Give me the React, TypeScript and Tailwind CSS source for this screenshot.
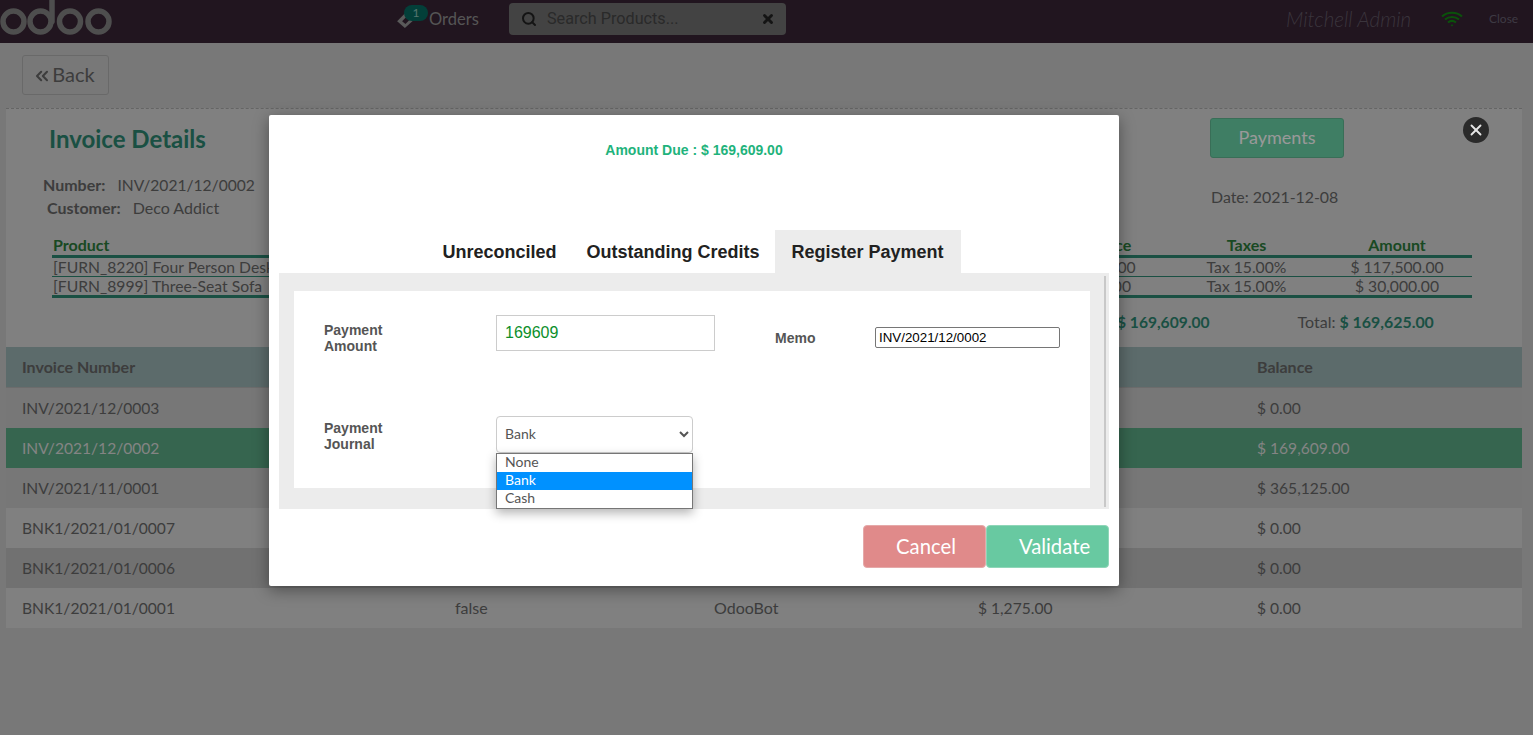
import { useState } from "react";
import { ChevronsLeft, Search, X } from "lucide-react";

const rows = [
  { number: "INV/2021/12/0003", balance: "$ 0.00", tone: "bg-[#c6c6c6]" },
  { number: "INV/2021/12/0002", balance: "$ 169,609.00", tone: "bg-[#5aa984] text-[#dcdcdc]" },
  { number: "INV/2021/11/0001", balance: "$ 365,125.00", tone: "bg-[#c6c6c6]" },
  { number: "BNK1/2021/01/0007", balance: "$ 0.00", tone: "bg-[#d5d5d5]" },
  { number: "BNK1/2021/01/0006", balance: "$ 0.00", tone: "bg-[#bcbcbc]" },
  { number: "BNK1/2021/01/0001", balance: "$ 0.00", tone: "bg-[#d5d5d5]", ref: "false", customer: "OdooBot", amount: "$ 1,275.00" },
];

const lines = [
  { name: "[FURN_8220] Four Person Desk", price: "$ 117,500.00", amount: "$ 117,500.00" },
  { name: "[FURN_8999] Three-Seat Sofa", price: "$ 30,000.00", amount: "$ 30,000.00" },
];

function Logo() {
  return (
    <svg width="114" height="38" viewBox="0 0 114 38" fill="none" stroke="#828282" strokeWidth="5.5">
      <circle cx="13.5" cy="21.5" r="10.5" />
      <circle cx="40.5" cy="21.5" r="10.5" />
      <path d="M52 21.5 V0" strokeLinecap="round" />
      <circle cx="70" cy="21.5" r="10.5" />
      <circle cx="98.5" cy="21.5" r="10.5" />
    </svg>
  );
}

function Wifi() {
  return (
    <svg width="22" height="16" viewBox="0 0 22 16" fill="none" stroke="#128912" strokeWidth="2">
      <path d="M1 5.5 C6.5 0.5 15.5 0.5 21 5.5" />
      <path d="M4 8.5 C8 5 14 5 18 8.5" />
      <path d="M7 11.5 C9.5 9.5 12.5 9.5 15 11.5" />
      <path d="M9.6 14 L11 15.5 L12.4 14 C11.6 13.3 10.4 13.3 9.6 14Z" fill="#128912" stroke="none" />
    </svg>
  );
}

function Ticket() {
  return (
    <svg width="20" height="20" viewBox="0 0 18 18" className="absolute left-0 top-[9px]">
      <path d="M1 11 L9 3 L17 9 L8 17Z" fill="#969696" />
      <path d="M5.5 11 L9.5 7 L12.5 9.5 L8.5 13.5Z" fill="#372334" />
    </svg>
  );
}

function Header() {
  return (
    <header className="flex h-[43px] items-center bg-[#372334] pb-[5px] text-[#8e8e8e]">
      <div className="h-[38px] w-[396px]">
        <Logo />
      </div>
      <div className="relative flex h-[38px] w-[113px] items-center pl-[33px] text-[16.5px]">
        <Ticket />
        <span className="absolute left-[8px] top-[5px] h-4 w-6 rounded-full bg-[#066a60] text-center text-xs leading-4 text-[#8cc4b8]">1</span>
        Orders
      </div>
      <div className="flex h-8 w-[277px] items-center rounded bg-[#707070] pl-3 pr-[11px] text-[#222222]">
        <Search size={16} strokeWidth={3} />
        <span className="ml-[10px] flex-1 pt-px text-[16.2px] font-['Roboto',sans-serif] text-[#464646]">Search Products...</span>
        <X size={14} strokeWidth={5} />
      </div>
      <span className="ml-[500px] w-[155px] text-[20.6px] italic font-light text-[#615764]">Mitchell Admin</span>
      <Wifi />
      <span className="ml-[26px] text-xs text-[#676171]">Close</span>
    </header>
  );
}

function InvoiceDetails() {
  return (
    <div className="relative h-[239px] border-t border-dashed border-[#a8a8a8] bg-[#d5d5d5]">
      <div className="flex pl-[37px]">
        <div className="w-[1167px]">
          <h1 className="ml-1.5 mt-[15px] text-2xl font-bold leading-[30px] text-[#2c8570]">Invoice Details</h1>
          <p className="mt-[19px] h-[23px] text-base leading-[23px] text-[#666666]">
            <b className="mr-2">Number:</b> <span className="text-[15.6px]">INV/2021/12/0002</span>
          </p>
          <p className="ml-1 h-[23px] text-base leading-[23px] text-[#666666]">
            <b className="mr-2">Customer:</b> Deco Addict
          </p>
        </div>
        <div className="w-[134px]">
          <button className="mt-[9px] h-10 w-[134px] rounded-[3px] border border-[#5fb892] bg-[#69d2a7] pb-[3px] text-lg text-white">Payments</button>
          <p className="ml-px mt-[27px] text-[15.9px] leading-6 text-[#666666]">Date: 2021-12-08</p>
        </div>
      </div>

      <table className="ml-[46px] mt-[17px] w-[1420px] table-fixed text-[15.7px] leading-[18px] text-[#666666]">
        <colgroup>
          <col className="w-[957px]" />
          <col className="w-[160px]" />
          <col className="w-[155px]" />
          <col />
        </colgroup>
        <thead>
          <tr className="h-5 border-b-[3px] border-[#2c8570] text-base leading-[18px] font-bold text-[#2a7a3a]">
            <th className="pl-px text-left">Product</th>
            <th className="pl-[14px]">Unit Price</th>
            <th>Taxes</th>
            <th className="pr-0.5">Amount</th>
          </tr>
        </thead>
        <tbody>
          {lines.map((line, i) => (
            <tr key={line.name} className={i === 0 ? "border-b border-[#2c8570]" : "border-b-[3px] border-[#2c8570]"}>
              <td className="pl-px">{line.name}</td>
              <td className="text-center">{line.price}</td>
              <td className="text-center">Tax 15.00%</td>
              <td className="pr-0.5 text-center">{line.amount}</td>
            </tr>
          ))}
        </tbody>
      </table>

      <div className="mt-[14px] flex text-base leading-5 text-[#666666]">
        <span className="ml-[1111px] text-[15.6px] font-bold text-[#2c8570]">$ 169,609.00</span>
        <span className="ml-[88px]">
          Total: <b className="text-[15.9px] text-[#2c8570]">$ 169,625.00</b>
        </span>
      </div>
    </div>
  );
}

function InvoiceTable() {
  return (
    <div className="text-base text-[#666666]">
      <div className="grid h-[41px] grid-cols-[433px_259px_264px_279px_1fr] items-center border-b border-[#b5b5b5] bg-[#99b2b2] pl-4 font-bold">
        <span>Invoice Number</span>
        <span />
        <span />
        <span />
        <span>Balance</span>
      </div>
      {rows.map((row) => (
        <div key={row.number} className={`grid h-10 grid-cols-[433px_259px_264px_279px_1fr] items-center pl-4 ${row.tone}`}>
          <span className="text-[15.6px] leading-6">{row.number}</span>
          <span>{row.ref}</span>
          <span>{row.customer}</span>
          <span className="text-[15.6px] leading-6">{row.amount}</span>
          <span className="text-[15.6px] leading-6">{row.balance}</span>
        </div>
      ))}
    </div>
  );
}

function PaymentModal() {
  const [tab, setTab] = useState("Register Payment");
  return (
    <div className="absolute inset-0 bg-black/40 font-['Liberation_Sans',Arial,sans-serif]">
      <span className="absolute left-[1463px] top-[117px] flex h-[26px] w-[26px] items-center justify-center rounded-full bg-[#2a2a2a] text-[#e5e5e5]">
        <X size={18} strokeWidth={2.5} />
      </span>
      <div className="absolute left-[269px] top-[115px] h-[471px] w-[850px] rounded-[2px] bg-white shadow-[0_4px_16px_rgba(0,0,0,0.4)]">
        <p className="pt-[27px] text-center text-sm font-bold leading-4 text-[#1fb37c]">Amount Due : $ 169,609.00</p>

        <div className="mt-[72px] flex h-[43px] justify-center text-lg font-bold text-[#212121]">
          {["Unreconciled", "Outstanding Credits", "Register Payment"].map((name) => (
            <button
              key={name}
              onClick={() => setTab(name)}
              className={tab === name ? "ml-px bg-[#ececec] pl-4 pr-[17px]" : "px-[15px]"}
            >
              {name}
            </button>
          ))}
        </div>

        <div className="relative mx-2.5 h-[236px] bg-[#ececec] px-[15px] pb-[21px] pt-[18px]">
          <div className="absolute right-[3px] top-[3px] h-[231px] w-0.5 bg-[#c8c8c8]" />
          <div className="relative h-[197px] w-[796px] bg-white">
            <label className="absolute left-[30px] top-[31px] w-20 text-sm font-bold leading-4 text-[#555555]">Payment Amount</label>
            <input
              defaultValue="169609"
              className="absolute left-[202px] top-[24px] h-9 w-[219px] border border-[#cccccc] px-2 text-base text-[#0c8f2b]"
            />
            <label className="absolute left-[481px] top-[39px] text-sm font-bold leading-4 text-[#555555]">Memo</label>
            <input
              defaultValue="INV/2021/12/0002"
              className="absolute left-[581px] top-[36px] h-[21px] w-[185px] rounded-[2px] border border-[#767676] px-[3px] text-[13.33px] text-black"
            />
            <label className="absolute left-[30px] top-[129px] w-20 text-sm font-bold leading-4 text-[#555555]">Payment Journal</label>
            <select
              defaultValue="Bank"
              className="absolute left-[202px] top-[125px] h-[37px] w-[197px] rounded border border-[#cccccc] bg-white pb-0.5 pl-1 font-['Lato',sans-serif] text-sm text-[#555555]"
            >
              <option>None</option>
              <option>Bank</option>
              <option>Cash</option>
            </select>
            <ul className="absolute left-[202px] top-[162px] z-10 w-[197px] border border-[#767676] bg-white font-['Lato',sans-serif] text-sm leading-4 text-[#555555] shadow-[0_4px_10px_rgba(0,0,0,0.3)]">
              <li className="pb-0.5 pl-2">None</li>
              <li className="bg-[#0091ff] pb-0.5 pl-2 text-white">Bank</li>
              <li className="pb-0.5 pl-2">Cash</li>
            </ul>
          </div>
        </div>

        <div className="mt-4 flex justify-end pr-2.5 font-['Lato',sans-serif] text-[20.3px] text-white">
          <button className="h-[43px] w-[123px] rounded border border-[#e5a9a9] bg-[#e08a8a] pl-[3px]">Cancel</button>
          <button className="h-[43px] w-[123px] rounded border border-[#8fd6b8] bg-[#68c9a1] pl-[14px]">Validate</button>
        </div>
      </div>
    </div>
  );
}

export default function App() {
  return (
    <div className="relative h-[735px] overflow-hidden bg-[#c8c8c8] font-['Lato',sans-serif]">
      <Header />
      <div className="px-[22px] pt-3">
        <button className="flex h-10 w-[87px] items-center justify-center rounded-[3px] border border-[#b0b0b0] pb-0.5 pr-1 text-xl text-[#666666]">
          <ChevronsLeft size={20} strokeWidth={2.5} className="mt-1" />
          Back
        </button>
      </div>
      <div className="mx-1.5 mt-[13px] w-[1516px]">
        <InvoiceDetails />
        <InvoiceTable />
      </div>
      <PaymentModal />
    </div>
  );
}
